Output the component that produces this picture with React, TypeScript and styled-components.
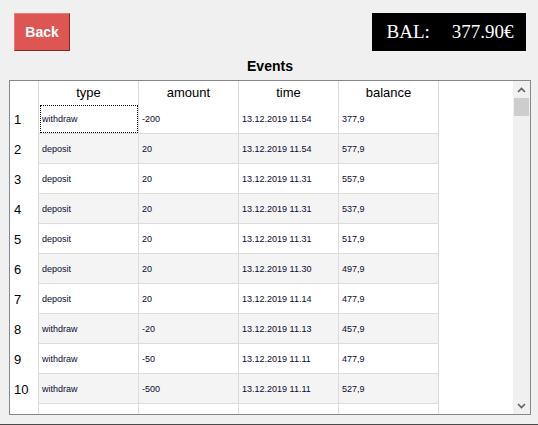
import React from 'react';
import styled, { createGlobalStyle } from 'styled-components';

const GlobalStyle = createGlobalStyle`
  html, body {
    margin: 0;
    padding: 0;
    background: #f0f0f0;
  }
  * { box-sizing: border-box; }
`;

type EventRow = { type: string; amount: string; time: string; balance: string };

const events: EventRow[] = [
  { type: 'withdraw', amount: '-200', time: '13.12.2019 11.54', balance: '377,9' },
  { type: 'deposit', amount: '20', time: '13.12.2019 11.54', balance: '577,9' },
  { type: 'deposit', amount: '20', time: '13.12.2019 11.31', balance: '557,9' },
  { type: 'deposit', amount: '20', time: '13.12.2019 11.31', balance: '537,9' },
  { type: 'deposit', amount: '20', time: '13.12.2019 11.31', balance: '517,9' },
  { type: 'deposit', amount: '20', time: '13.12.2019 11.30', balance: '497,9' },
  { type: 'deposit', amount: '20', time: '13.12.2019 11.14', balance: '477,9' },
  { type: 'withdraw', amount: '-20', time: '13.12.2019 11.13', balance: '457,9' },
  { type: 'withdraw', amount: '-50', time: '13.12.2019 11.11', balance: '477,9' },
  { type: 'withdraw', amount: '-500', time: '13.12.2019 11.11', balance: '527,9' },
  { type: '', amount: '', time: '', balance: '' },
];

const columns: (keyof EventRow)[] = ['type', 'amount', 'time', 'balance'];

const Window = styled.div`
  width: 538px;
  height: 425px;
  background: #f0f0f0;
  border-bottom: 1px solid #4a4a4a;
  display: flex;
  flex-direction: column;
  font-family: 'Liberation Sans', Arial, sans-serif;
  overflow: hidden;
`;

const TopBar = styled.div`
  display: flex;
  justify-content: space-between;
  align-items: flex-start;
  padding: 13px 12px 0 14px;
`;

const BackButton = styled.button`
  width: 56px;
  height: 38px;
  padding: 0;
  background: #dd5653;
  border: 1px solid;
  border-color: #e97a77 #7c2a28 #7c2a28 #e97a77;
  color: #ffffff;
  font-family: 'Liberation Sans', Arial, sans-serif;
  font-weight: bold;
  font-size: 14px;
  cursor: pointer;
`;

const BalanceBox = styled.div`
  width: 154px;
  height: 38px;
  background: #000000;
  color: #ffffff;
  display: flex;
  align-items: center;
  justify-content: center;
  gap: 22px;
  font-family: 'Liberation Serif', 'Times New Roman', serif;
  font-size: 19px;
  padding-left: 2px;
`;

const Title = styled.div`
  margin-top: 7px;
  height: 16px;
  line-height: 16px;
  text-align: center;
  font-weight: bold;
  font-size: 14px;
  color: #000;
  padding-left: 2px;
`;

const TableFrame = styled.div`
  margin: 6px 7px 0 9px;
  height: 335px;
  border: 1px solid #828790;
  background: #ffffff;
  display: flex;
`;

const Grid = styled.div`
  flex: 1;
  overflow: hidden;
  display: flex;
  flex-direction: column;
`;

const HeaderRow = styled.div`
  display: flex;
  height: 23px;
  flex-shrink: 0;
`;

const Row = styled.div`
  display: flex;
  height: 30px;
  flex-shrink: 0;
`;

const Corner = styled.div`
  width: 28px;
  flex-shrink: 0;
`;

const RowNumber = styled.div`
  width: 28px;
  flex-shrink: 0;
  padding-left: 4px;
  display: flex;
  align-items: center;
  font-size: 13px;
  color: #000;
`;

const HeaderCell = styled.div<{ $last?: boolean }>`
  width: ${(p) => (p.$last ? 101 : 100)}px;
  flex-shrink: 0;
  border-left: 1px solid #dcdcdc;
  border-right: ${(p) => (p.$last ? '1px solid #dcdcdc' : 'none')};
  display: flex;
  align-items: center;
  justify-content: center;
  font-size: 13px;
  color: #000;
`;

const Cell = styled.div<{ $alt: boolean; $last?: boolean; $focused?: boolean }>`
  position: relative;
  width: ${(p) => (p.$last ? 101 : 100)}px;
  flex-shrink: 0;
  border-left: 1px solid #dcdcdc;
  border-right: ${(p) => (p.$last ? '1px solid #dcdcdc' : 'none')};
  border-bottom: 1px solid #dcdcdc;
  background: ${(p) => (p.$alt ? '#f4f4f4' : '#ffffff')};
  display: flex;
  align-items: center;
  padding-left: 3px;
  font-size: 9px;
  color: #0a0a30;
  white-space: nowrap;

  ${(p) =>
    p.$focused &&
    `
    &::after {
      content: '';
      position: absolute;
      left: 1px;
      top: 1px;
      right: 0px;
      bottom: 0px;
      border: 1px dotted #000;
    }
  `}
`;

const Scrollbar = styled.div`
  width: 17px;
  flex-shrink: 0;
  background: #f0f0f0;
  display: flex;
  flex-direction: column;
  align-items: center;
`;

const ArrowBox = styled.div`
  width: 17px;
  height: 17px;
  display: flex;
  align-items: center;
  justify-content: center;
  flex-shrink: 0;
`;

const Thumb = styled.div`
  width: 15px;
  height: 18px;
  background: #cdcdcd;
`;

const Track = styled.div`
  flex: 1;
`;

const Chevron = ({ up }: { up?: boolean }) => (
  <svg width="9" height="6" viewBox="0 0 9 6">
    <path
      d={up ? 'M1 5 L4.5 1.5 L8 5' : 'M1 1 L4.5 4.5 L8 1'}
      fill="none"
      stroke="#606060"
      strokeWidth="1.6"
    />
  </svg>
);

export default function App() {
  return (
    <>
      <GlobalStyle />
      <Window>
        <TopBar>
          <BackButton>Back</BackButton>
          <BalanceBox>
            <span>BAL:</span>
            <span>377.90€</span>
          </BalanceBox>
        </TopBar>
        <Title>Events</Title>
        <TableFrame>
          <Grid>
            <HeaderRow>
              <Corner />
              {columns.map((c, i) => (
                <HeaderCell key={c} $last={i === columns.length - 1}>
                  {c}
                </HeaderCell>
              ))}
            </HeaderRow>
            {events.map((ev, r) => (
              <Row key={r}>
                <RowNumber>{r < 10 ? r + 1 : ''}</RowNumber>
                {columns.map((c, i) => (
                  <Cell
                    key={c}
                    $alt={r % 2 === 1}
                    $last={i === columns.length - 1}
                    $focused={r === 0 && i === 0}
                  >
                    {ev[c]}
                  </Cell>
                ))}
              </Row>
            ))}
          </Grid>
          <Scrollbar>
            <ArrowBox>
              <Chevron up />
            </ArrowBox>
            <Thumb />
            <Track />
            <ArrowBox>
              <Chevron />
            </ArrowBox>
          </Scrollbar>
        </TableFrame>
      </Window>
    </>
  );
}
